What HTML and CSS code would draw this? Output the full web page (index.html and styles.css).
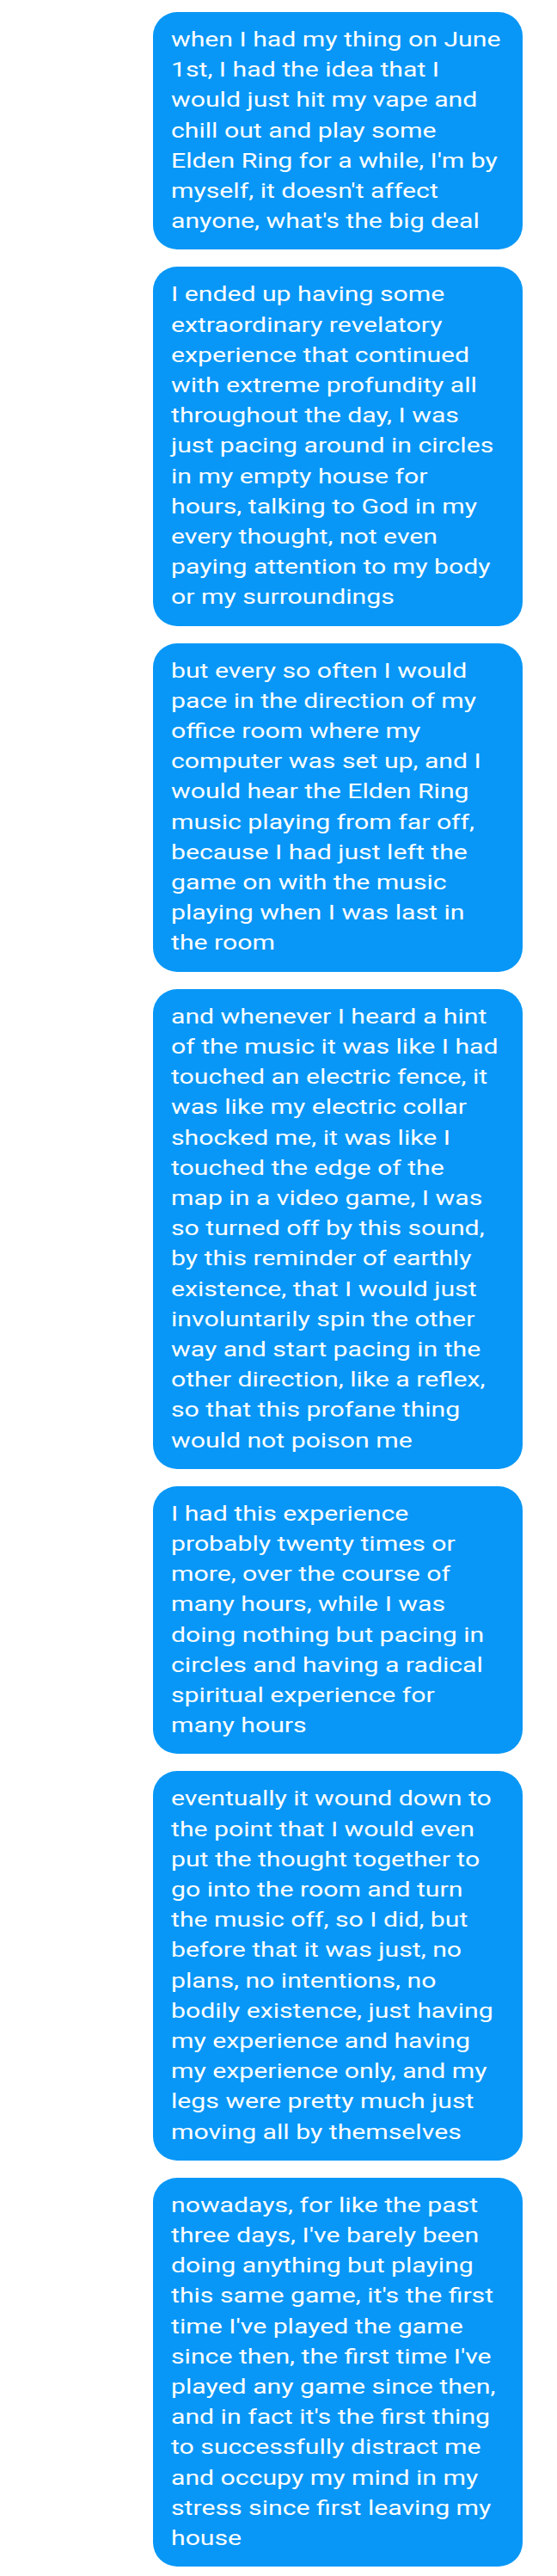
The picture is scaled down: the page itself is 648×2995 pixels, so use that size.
FILE: index.html
```html
<!DOCTYPE html>
<html lang="en">
<head>
<meta charset="utf-8">
<title>Messages</title>
<link rel="stylesheet" href="styles.css">
</head>
<body>
<main class="thread">
  <p class="bubble"><span class="text">when I had my thing on June<br>1st, I had the idea that I<br>would just hit my vape and<br>chill out and play some<br>Elden Ring for a while, I'm by<br>myself, it doesn't affect<br>anyone, what's the big deal</span></p>
  <p class="bubble"><span class="text">I ended up having some<br>extraordinary revelatory<br>experience that continued<br>with extreme profundity all<br>throughout the day, I was<br>just pacing around in circles<br>in my empty house for<br>hours, talking to God in my<br>every thought, not even<br>paying attention to my body<br>or my surroundings</span></p>
  <p class="bubble"><span class="text">but every so often I would<br>pace in the direction of my<br>office room where my<br>computer was set up, and I<br>would hear the Elden Ring<br>music playing from far off,<br>because I had just left the<br>game on with the music<br>playing when I was last in<br>the room</span></p>
  <p class="bubble"><span class="text">and whenever I heard a hint<br>of the music it was like I had<br>touched an electric fence, it<br>was like my electric collar<br>shocked me, it was like I<br>touched the edge of the<br>map in a video game, I was<br>so turned off by this sound,<br>by this reminder of earthly<br>existence, that I would just<br>involuntarily spin the other<br>way and start pacing in the<br>other direction, like a reflex,<br>so that this profane thing<br>would not poison me</span></p>
  <p class="bubble"><span class="text">I had this experience<br>probably twenty times or<br>more, over the course of<br>many hours, while I was<br>doing nothing but pacing in<br>circles and having a radical<br>spiritual experience for<br>many hours</span></p>
  <p class="bubble"><span class="text">eventually it wound down to<br>the point that I would even<br>put the thought together to<br>go into the room and turn<br>the music off, so I did, but<br>before that it was just, no<br>plans, no intentions, no<br>bodily existence, just having<br>my experience and having<br>my experience only, and my<br>legs were pretty much just<br>moving all by themselves</span></p>
  <p class="bubble"><span class="text">nowadays, for like the past<br>three days, I've barely been<br>doing anything but playing<br>this same game, it's the first<br>time I've played the game<br>since then, the first time I've<br>played any game since then,<br>and in fact it's the first thing<br>to successfully distract me<br>and occupy my mind in my<br>stress since first leaving my<br>house</span></p>
</main>
</body>
</html>
```

FILE: styles.css
```css
html, body {
  margin: 0;
  padding: 0;
  background: #ffffff;
}

.thread {
  display: flex;
  flex-direction: column;
  align-items: flex-end;
  gap: 20px;
  padding: 14px 40px 10px 0;
}

.bubble {
  box-sizing: border-box;
  width: 430px;
  margin: 0;
  padding: 15px 21px;
  background: #0897f6;
  color: #ffffff;
  border-radius: 28px;
  font-family: Roboto, "Noto Sans", "Liberation Sans", sans-serif;
  font-size: 23.5px;
  line-height: 35.2px;
  white-space: nowrap;
}

.text {
  display: inline-block;
  vertical-align: top;
  transform: scaleX(1.285);
  transform-origin: left center;
}
```
